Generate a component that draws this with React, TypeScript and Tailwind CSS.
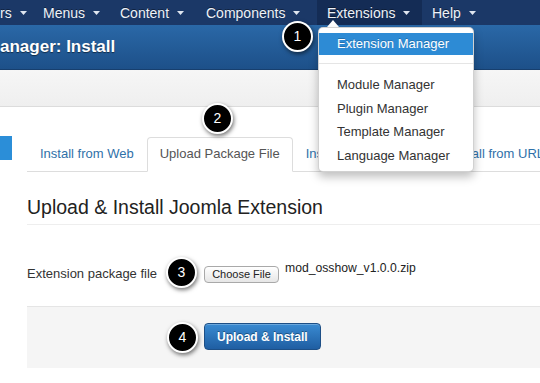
import React from "react";

// nav label + the width of its box (distance to the next label)
const navItems: { label: string; w: string }[] = [
  { label: "rs", w: "w-[43px] -ml-[10px]" },
  { label: "Menus", w: "w-[77px]" },
  { label: "Content", w: "w-[86px]" },
  { label: "Components", w: "w-[121px]" },
  { label: "Extensions", w: "w-[105px]" },
  { label: "Help", w: "" },
];

const tabs = [
  "Install from Web",
  "Upload Package File",
  "Install from Directory",
  "Install from URL",
];

const menuItems = ["Module Manager", "Plugin Manager", "Template Manager", "Language Manager"];

function Caret() {
  return (
    <svg width="7" height="4" viewBox="0 0 7 4" className="ml-[8px] mt-[1px] shrink-0">
      <path d="M0 0 L7 0 L3.5 4 Z" fill="#dfe6f0" />
    </svg>
  );
}

function Marker({ n, className }: { n: number; className: string }) {
  return (
    <div
      className={`absolute w-[31px] h-[31px] rounded-full bg-black border-2 border-white flex items-center justify-center text-white text-[14px] shadow-[1px_2px_4px_rgba(0,0,0,0.55)] ${className}`}
    >
      {n}
    </div>
  );
}

export default function App() {
  return (
    <div className="relative w-[540px] h-[383px] overflow-hidden bg-white font-['Liberation_Sans',Arial,sans-serif]">
      {/* top nav */}
      <nav className="h-[25px] bg-[#1b3867] flex items-stretch text-[14px] text-[#eef2f8] [text-shadow:0_-1px_0_rgba(0,0,0,0.4)] overflow-hidden">
        {navItems.map((item) => (
          <div
            key={item.label}
            className={`flex items-center pl-[10px] pr-[10px] shrink-0 ${item.w} ${
              item.label === "Extensions" ? "bg-[#142c55]" : ""
            }`}
          >
            <span className="leading-none">{item.label}</span>
            <Caret />
          </div>
        ))}
      </nav>

      {/* page header */}
      <header className="h-[45px] bg-gradient-to-b from-[#2a68a7] to-[#1d5089] border-b border-[#173f6e] flex items-center">
        <h1 className="text-[17px] font-bold text-white [text-shadow:0_1px_1px_rgba(0,0,0,0.5)]">
          anager: Install
        </h1>
      </header>

      {/* toolbar */}
      <div className="h-[37px] bg-gradient-to-b from-[#f6f6f6] to-[#efefef] border-b border-[#dcdcdc]" />

      {/* body */}
      <div className="flex pt-[29px]">
        <div className="w-[12px] shrink-0">
          <div className="h-[24px] bg-[#2b8ed8]" />
        </div>

        <main className="ml-[15px] flex-1 min-w-0 pt-px">
          <ul className="flex h-[35px] border-b border-[#dddddd] text-[13px] whitespace-nowrap">
            {tabs.map((t) => {
              const active = t === "Upload Package File";
              return (
                <li
                  key={t}
                  className={`h-[35px] -mb-px px-[12px] pb-[2px] flex items-center rounded-t-[4px] border shrink-0 ${
                    active
                      ? "border-[#dddddd] border-b-white bg-white text-[#555555]"
                      : "border-transparent text-[#3071a9]"
                  }`}
                >
                  {t}
                </li>
              );
            })}
          </ul>

          <h2 className="mt-[23px] pb-[5px] leading-[24px] text-[19.5px] text-[#222222] border-b border-[#eeeeee]">
            Upload &amp; Install Joomla Extension
          </h2>

          <div className="mt-[40px] flex items-start text-[13px] text-[#333333]">
            <label className="w-[177px] shrink-0 leading-[18px]">Extension package file</label>
            <div className="flex items-start">
              <button className="h-[17px] w-[75px] mt-px rounded-[4px] border border-[#a9a9a9] bg-gradient-to-b from-white to-[#e6e6e6] text-[11px] text-[#222222] leading-none">
                Choose File
              </button>
              <span className="ml-[6px] -mt-[6px] leading-[18px] text-[12.2px] text-[#222222]">
                mod_osshow_v1.0.0.zip
              </span>
            </div>
          </div>

          <div className="mt-[23px] bg-[#f5f5f5] border-t border-[#e5e5e5] pt-[16px] pb-[18px] pl-[177px]">
            <button className="h-[27px] px-[12px] rounded-[4px] border border-[#1d4f86] bg-gradient-to-b from-[#3a8bd2] to-[#1f5ea2] text-white text-[12px] font-bold [text-shadow:0_-1px_0_rgba(0,0,0,0.35)] shadow-[inset_0_1px_0_rgba(255,255,255,0.25)]">
              Upload &amp; Install
            </button>
          </div>
        </main>
      </div>

      {/* dropdown menu */}
      <svg width="12" height="7" viewBox="0 0 12 7" className="absolute left-[327px] top-[20px]">
        <path d="M0 7 L6 0 L12 7 Z" fill="#ffffff" />
      </svg>
      <div className="absolute left-[318px] top-[27px] w-[156px] h-[145px] bg-white rounded-[5px] border border-[rgba(0,0,0,0.18)] shadow-[0_5px_10px_rgba(0,0,0,0.25)] py-[5px] text-[13px] text-[#333333]">
        <div className="h-[22px] bg-[#2d8bd5] text-white flex items-center pl-[18px] [text-shadow:0_-1px_0_rgba(0,0,0,0.2)]">
          Extension Manager
        </div>
        <div className="my-[8px] h-[2px] border-t border-[#e5e5e5] border-b border-b-white" />
        {menuItems.map((m) => (
          <div key={m} className="h-[23.5px] flex items-center pl-[18px]">
            {m}
          </div>
        ))}
      </div>

      {/* annotation markers */}
      <Marker n={1} className="left-[282px] top-[21px]" />
      <Marker n={2} className="left-[202px] top-[103px]" />
      <Marker n={3} className="left-[166px] top-[257px]" />
      <Marker n={4} className="left-[167px] top-[322px]" />
    </div>
  );
}
